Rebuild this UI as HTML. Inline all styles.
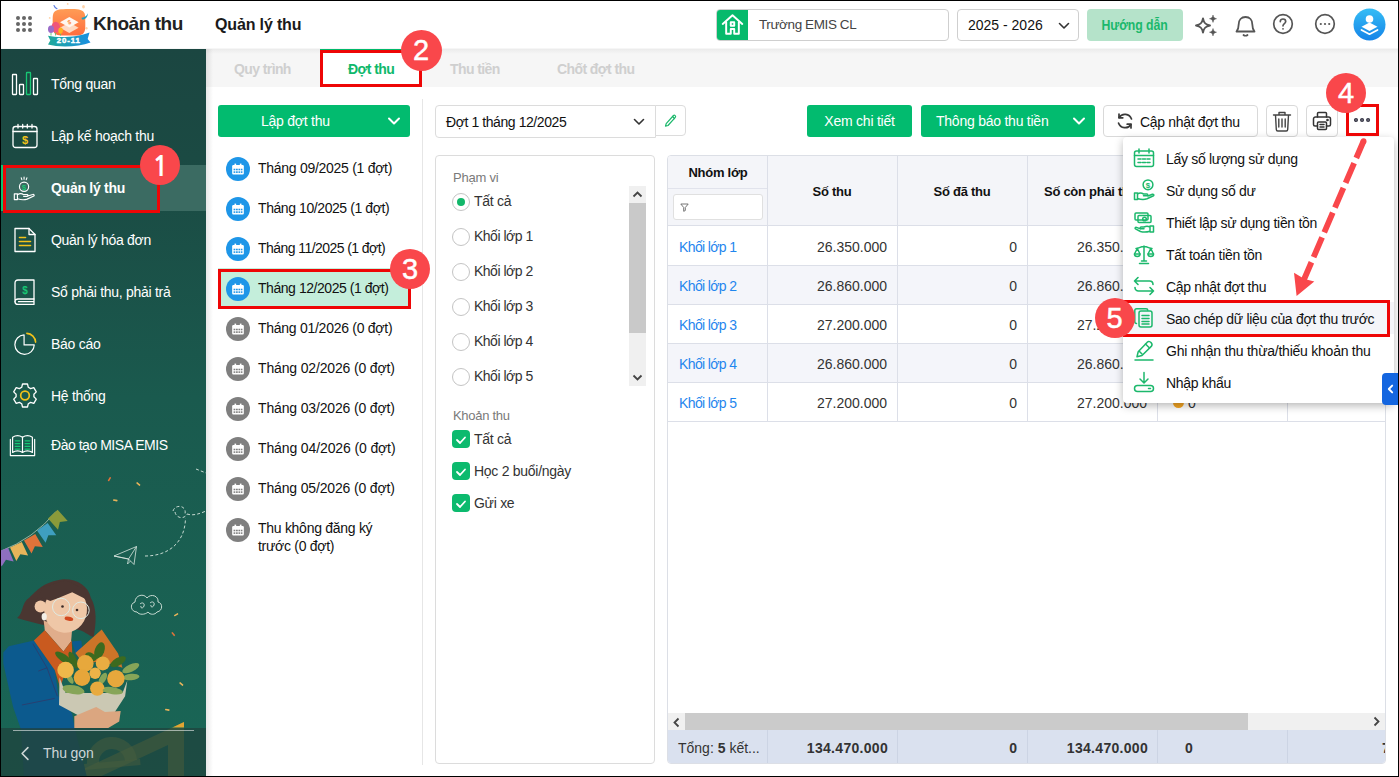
<!DOCTYPE html>
<html lang="vi">
<head>
<meta charset="utf-8">
<title>Quản lý thu - Đợt thu</title>
<style>
*{box-sizing:border-box;margin:0;padding:0}
html,body{width:1399px;height:777px;overflow:hidden;background:#fff}
body{font-family:"Liberation Sans",sans-serif;font-size:14px;color:#111;position:relative}
.abs{position:absolute}
#frame{position:absolute;left:0;top:0;width:1399px;height:777px;border:1px solid #000;border-right-width:1px;border-bottom-width:1px;z-index:100;pointer-events:none}
/* header */
#hdr{position:absolute;left:1px;top:1px;width:1397px;height:48px;background:#fff}
#hdr .t1{position:absolute;left:92px;top:12px;font-size:19px;font-weight:bold;color:#222;letter-spacing:-0.45px;white-space:nowrap}
#hdr .t2{position:absolute;left:214px;top:15px;font-size:16px;font-weight:bold;color:#1a1a1a;letter-spacing:-0.15px;white-space:nowrap}
.box{position:absolute;border:1px solid #cfcfcf;border-radius:4px;background:#fff}
/* sidebar */
#side{position:absolute;left:1px;top:49px;width:205px;height:727px;background:linear-gradient(180deg,#1b4641 0%,#1b4a43 15%,#1a5a4e 48%,#196656 100%);overflow:hidden}
.mi{position:absolute;left:0;width:205px;height:44px;color:#fff;font-size:14px}
.mi span{position:absolute;left:50px;top:14px;white-space:nowrap;letter-spacing:-0.28px}
.mi.act{background:#3b6b62;font-weight:bold}
/* tabs */
#tabs{position:absolute;left:206px;top:49px;width:1192px;height:38px;background:linear-gradient(180deg,#ebebeb 0,#f6f6f6 5px)}
.tab{position:absolute;top:12px;font-size:14px;font-weight:bold;color:#cfcfcf;white-space:nowrap;letter-spacing:-0.6px}
#tabact{position:absolute;left:114px;top:0;width:101px;height:38px;background:#fff;border-top:2px solid #00b96b}
/* list */
.li{position:absolute;left:218px;width:192px;height:40px;font-size:14px;color:#111}
.li .ic{position:absolute;left:8px;top:9px;width:24px;height:24px;border-radius:50%;background:#1e96e8}
.li.g .ic{background:#7f7f7f}
.li span{position:absolute;left:40px;top:12px;white-space:nowrap;letter-spacing:-0.28px}
.btn{position:absolute;height:32px;border-radius:3px;background:#02bb6f;color:#fff;font-size:14px;text-align:center;line-height:33px;white-space:nowrap;letter-spacing:-0.24px}
.wbtn{position:absolute;height:32px;border-radius:4px;background:#fff;border:1px solid #d9d9d9}
/* filter */
.rad{position:absolute;left:16px;width:18px;height:18px;border-radius:50%;border:1px solid #c4c4c4;background:#fff}
.fl{position:absolute;left:38px;font-size:14px;color:#333;white-space:nowrap;letter-spacing:-0.28px}
.chk{position:absolute;left:16px;width:18px;height:18px;border-radius:4px;background:#0cba6e}
/* table */
#tbl{position:absolute;left:667px;top:155px;width:719px;height:609px;border:1px solid #dcdfe6;border-radius:4px;overflow:hidden;background:#fff}
.th{position:absolute;font-weight:bold;font-size:13px;color:#111;white-space:nowrap;letter-spacing:-.27px}
.vl{position:absolute;width:1px;background:#dcdfe8}
.row{position:absolute;left:0;width:717px;height:39px;border-bottom:1px solid #dcdfe8;font-size:14px;color:#333}
.row.alt{background:#f4f5fa}
.row span{position:absolute;top:12px;white-space:nowrap}
/* menu */
#menu{position:absolute;left:1123px;top:137px;width:271px;height:266px;background:#fff;border-radius:4px;box-shadow:0 3px 8px rgba(0,0,0,.28)}
.mn{position:absolute;left:0;width:271px;height:32px;font-size:14px;color:#111}
.mn span{position:absolute;left:43px;top:9px;white-space:nowrap;letter-spacing:-0.3px}
/* annotations */
.rc{position:absolute;border-radius:50%;background:#f9474b;color:#fff;text-align:center;font-size:29px;-webkit-text-stroke:.5px #fff}
.rr{position:absolute;border:3px solid #ee0606}
</style>
</head>
<body>
<div id="hdr">
  <svg class="abs" style="left:14px;top:14px" width="18" height="18" viewBox="0 0 18 18" fill="#666"><circle cx="3" cy="3" r="2"/><circle cx="9" cy="3" r="2"/><circle cx="15" cy="3" r="2"/><circle cx="3" cy="9" r="2"/><circle cx="9" cy="9" r="2"/><circle cx="15" cy="9" r="2"/><circle cx="3" cy="15" r="2"/><circle cx="9" cy="15" r="2"/><circle cx="15" cy="15" r="2"/></svg>
  <svg id="logo" class="abs" style="left:45px;top:1px" width="46" height="46" viewBox="46 2 46 46">
    <defs><linearGradient id="lg1" x1="0" y1="0" x2="0" y2="1"><stop offset="0" stop-color="#ff9c55"/><stop offset="1" stop-color="#ff6d3f"/></linearGradient><linearGradient id="lg2" x1="0" y1="0" x2="1" y2="0"><stop offset="0" stop-color="#20a99a"/><stop offset="1" stop-color="#1a8fe2"/></linearGradient></defs>
    <path d="M69 9c9 0 12.500.5 14.500 2.800S85.300 17 85.300 22.500 85.500 31 83.500 33.200 78 35.600 69 35.600 56.500 35.500 54.500 33.200 52.700 28 52.700 22.500 52.500 14 54.500 11.800 60 9 69 9z" fill="url(#lg1)"/>
    <path d="M69.300 22.500l9.300 5.200-9.300 5.200-9.300-5.200z" fill="#ffd9c2"/>
    <path d="M69.300 17l9.300 5.200-9.300 5.200-9.300-5.200z" fill="#fff7f0"/>
    <text x="69.300" y="24.300" font-size="6" font-weight="bold" fill="#ff8a3c" text-anchor="middle" font-family="Liberation Sans, sans-serif" transform="rotate(-20 69.300 22.200)">$</text>
    <path d="M51 33v2.500M55.500 32.500v3M60.500 33.500v2" stroke="#5fc070" stroke-width=".9"/>
    <ellipse cx="55.700" cy="27.200" rx="4.300" ry="5.400" fill="#f0557a"/><ellipse cx="51" cy="29.300" rx="3" ry="3.700" fill="#9a6cc9"/><ellipse cx="60.600" cy="30.600" rx="2.300" ry="3.100" fill="#ffb320"/>
    <path d="M48 35.800c12 2.600 30 1.200 41.500-3.300l-1.800 6.500 2.800 3.400c-12 4.500-31 5.200-42.500 2l2.300-4z" fill="url(#lg2)"/>
    <text x="68.800" y="43" font-size="7.800" font-weight="bold" fill="#fff" stroke="#fff" stroke-width=".45" text-anchor="middle" letter-spacing=".9" font-family="Liberation Sans, sans-serif">20-11</text>
    <path d="M81.500 17.800c3.500-.3 5.500-2 6.300-4.500.2 3.500-2.500 6.500-5.800 6.300z" fill="#1f9fc0"/><path d="M54 5.500c.5 1.500 1.500 2.600 3 3.300" stroke="#5a7ae0" stroke-width="1.100" fill="none" stroke-linecap="round"/>
    <circle cx="67.700" cy="3.900" r=".9" fill="#ffd3a8"/><ellipse cx="83.500" cy="6.800" rx="1.400" ry="1.800" fill="#ffd3a8"/><circle cx="49.700" cy="17.900" r=".9" fill="#ffd3a8"/><circle cx="86.400" cy="28.300" r="1.200" fill="#ffd3a8"/>
  </svg>
  <div class="t1">Khoản thu</div>
  <div class="t2">Quản lý thu</div>
  <div class="box" style="left:715px;top:8px;width:233px;height:32px;overflow:hidden"><div class="abs" style="left:-1px;top:-1px;width:32px;height:32px;background:#06ba6c"></div>
    <svg class="abs" style="left:4px;top:3px" width="23" height="23" viewBox="0 0 20 20" fill="none" stroke="#fff" stroke-width="1.700" stroke-linejoin="round" stroke-linecap="round"><path d="M1.500 9.500L10 2l8.500 7.500"/><path d="M4.500 8v10h4v-4h3v4h4V8"/><rect x="8.500" y="8" width="3" height="3"/></svg>
    <span class="abs" style="left:42px;top:7px;font-size:13.500px;color:#444;white-space:nowrap;letter-spacing:-.4px">Trường EMIS CL</span></div>
  <div class="box" style="left:956px;top:8px;width:122px;height:32px"><span class="abs" style="left:10px;top:7px;font-size:14px;color:#111;white-space:nowrap">2025 - 2026</span>
    <svg class="abs" style="left:100px;top:11px" width="12" height="10" viewBox="0 0 12 10" fill="none" stroke="#333" stroke-width="1.600" stroke-linecap="round" stroke-linejoin="round"><path d="M1.500 2.500L6 7l4.500-4.500"/></svg></div>
  <div class="abs" style="left:1086px;top:8px;width:96px;height:32px;border-radius:4px;background:#b5e3ca;color:#1cb86c;font-weight:bold;font-size:14px;text-align:center;line-height:33px"><span style="display:inline-block;transform:scaleX(.88);letter-spacing:-.1px">Hướng dẫn</span></div>
  <svg class="abs" style="left:1192px;top:12px" width="26" height="26" viewBox="0 0 26 26" fill="none" stroke="#555" stroke-width="1.900" stroke-linejoin="round"><path d="M10 5.500c.8 4.500 2.500 6.200 7 7-4.500.8-6.200 2.500-7 7-.8-4.500-2.500-6.200-7-7 4.500-.8 6.200-2.500 7-7z"/><path d="M20 2c.5 2.500 1.200 3.200 3.500 3.700-2.300.5-3 1.200-3.500 3.700-.5-2.500-1.200-3.200-3.500-3.700 2.300-.5 3-1.200 3.500-3.700z" fill="#555" stroke-width=".5"/><path d="M20 15.500c.5 2.500 1.200 3.200 3.500 3.700-2.300.5-3 1.200-3.500 3.700-.5-2.500-1.200-3.200-3.500-3.700 2.300-.5 3-1.200 3.500-3.700z" fill="#555" stroke-width=".5"/></svg>
  <svg class="abs" style="left:1232px;top:12px" width="24" height="26" viewBox="0 0 24 26" fill="none" stroke="#555" stroke-width="1.800" stroke-linecap="round" stroke-linejoin="round"><path d="M12.500 4c-4.200 0-6.800 3.200-6.800 7.200 0 3.500-.8 5.500-2.200 7.300h18c-1.400-1.800-2.200-3.800-2.200-7.300 0-4-2.600-7.200-6.800-7.200z"/><path d="M10.500 22c1 .9 3 .9 4 0"/></svg>
  <svg class="abs" style="left:1271px;top:12px" width="22" height="22" viewBox="0 0 22 22" fill="none" stroke="#555" stroke-width="1.700"><circle cx="11" cy="11" r="9.300"/><path d="M8.300 8.600c0-1.600 1.200-2.600 2.700-2.600s2.700 1 2.700 2.500c0 2-2.700 2.100-2.700 4.300" stroke-linecap="round"/><circle cx="11" cy="15.800" r=".9" fill="#555" stroke="none"/></svg>
  <svg class="abs" style="left:1313px;top:12px" width="22" height="22" viewBox="0 0 22 22" fill="none" stroke="#555" stroke-width="1.700"><circle cx="11" cy="11" r="9.300"/><g fill="#555" stroke="none"><circle cx="6.800" cy="11" r="1.100"/><circle cx="11" cy="11" r="1.100"/><circle cx="15.200" cy="11" r="1.100"/></g></svg>
  <svg class="abs" style="left:1352px;top:7px" width="33" height="33" viewBox="0 0 33 33"><defs><linearGradient id="av" x1="0" y1="0" x2="0" y2="1"><stop offset="0" stop-color="#35bdf5"/><stop offset="1" stop-color="#1584e8"/></linearGradient></defs><circle cx="16.500" cy="16.500" r="16" fill="url(#av)"/><circle cx="16.500" cy="11" r="3.800" fill="#fff"/><path d="M16.500 14.500l8 4.200-8 4.200-8-4.200z" fill="#fff"/><path d="M8.500 22l8 4.200 8-4.200" stroke="#fff" stroke-width="1.800" fill="none" stroke-linecap="round" stroke-linejoin="round"/></svg>
  <div class="abs" style="left:0;top:47px;width:1397px;height:1px;background:#f6f6f6"></div>
</div>
<div id="side">
  <div class="mi" style="top:13px"><svg class="abs" style="left:10px;top:9px" width="28" height="26" viewBox="0 0 28 26" stroke="#fff" stroke-width="1.300" fill="none" stroke-linecap="round" stroke-linejoin="round"><rect x="1.500" y="3.500" width="4" height="20" rx=".5"/><rect x="8.500" y="13.500" width="4" height="10" rx=".5"/><rect x="15.500" y="1.500" width="4" height="22" rx=".5" stroke="#17c774"/><rect x="22.500" y="7.500" width="4" height="16" rx=".5"/></svg><span>Tổng quan</span></div>
  <div class="mi" style="top:65px"><svg class="abs" style="left:10px;top:8px" width="28" height="28" viewBox="0 0 28 28" stroke="#fff" stroke-width="1.300" fill="none" stroke-linecap="round" stroke-linejoin="round"><rect x="2" y="4.500" width="24" height="21" rx="2.500"/><path d="M2 9.500h24M7 2.500v3.500M11.700 2.500v3.500M16.300 2.500v3.500M21 2.500v3.500"/><text x="14" y="22" font-size="11" font-weight="bold" fill="#f2c21a" stroke="none" text-anchor="middle" font-family="Liberation Sans, sans-serif">$</text></svg><span>Lập kế hoạch thu</span></div>
  <div class="mi act" style="top:116px;height:46px"><div class="abs" style="left:0;top:0;width:2px;height:46px;background:#10c070"></div><svg class="abs" style="left:12px;top:11px" width="23" height="25" viewBox="0 0 26 28" stroke="#fff" stroke-width="1.300" fill="none" stroke-linecap="round" stroke-linejoin="round"><circle cx="12.500" cy="12" r="5.200"/><path d="M12.500 1v2.500M9.300 2l.7 2M15.700 2l-.7 2"/><text x="12.500" y="15.300" font-size="8.500" font-weight="bold" fill="#17c774" stroke="none" text-anchor="middle" font-family="Liberation Sans, sans-serif">$</text><path d="M1.500 20h3.500v6.500H1.500zM5 21c2.500-1.500 5-1.500 7 0h4c1.200 0 1.200 2 0 2h-4M5 25.500c4 1.500 8 1.500 11 .5l7.500-3.500c1-.8 0-2.200-1.300-1.700L16.800 22.500"/></svg><span style="top:15px">Quản lý thu</span></div>
  <div class="mi" style="top:169px"><svg class="abs" style="left:12px;top:8px" width="24" height="28" viewBox="0 0 24 28" stroke="#fff" stroke-width="1.300" fill="none" stroke-linecap="round" stroke-linejoin="round"><path d="M2 2.500h14l6 6v17H2z"/><path d="M16 2.500v6h6"/><path d="M6.500 11.500h6M6.500 15.500h11M6.500 19.500h11" stroke="#f2c21a" stroke-width="1.600"/></svg><span>Quản lý hóa đơn</span></div>
  <div class="mi" style="top:221px"><svg class="abs" style="left:12px;top:8px" width="24" height="28" viewBox="0 0 24 28" stroke="#fff" stroke-width="1.300" fill="none" stroke-linecap="round" stroke-linejoin="round"><path d="M5 2h16v19H5c-1.800 0-3 1.200-3 2.700V5c0-1.800 1.200-3 3-3z"/><path d="M2 23.700C2 25.200 3.200 26.400 5 26.400h16M21 21v5.400M5.500 23.700H21"/><text x="12" y="15.500" font-size="10" font-weight="bold" fill="#17c774" stroke="none" text-anchor="middle" font-family="Liberation Sans, sans-serif">$</text></svg><span>Sổ phải thu, phải trả</span></div>
  <div class="mi" style="top:273px"><svg class="abs" style="left:12px;top:10px" width="24" height="24" viewBox="0 0 26 26" stroke="#fff" stroke-width="1.300" fill="none" stroke-linecap="round" stroke-linejoin="round"><path d="M12 3.200A10.500 10.500 0 1 0 23 14H12z"/><path d="M15 1.500A10 10 0 0 1 24.500 11" stroke="#f2c21a" stroke-width="1.700"/></svg><span>Báo cáo</span></div>
  <div class="mi" style="top:325px"><svg class="abs" style="left:10px;top:8px" width="28" height="28" viewBox="0 0 28 28" stroke="#fff" stroke-width="1.300" fill="none" stroke-linecap="round" stroke-linejoin="round"><path d="M11.500 2h5l.8 3.300 2.300 1.300 3.200-1 2.500 4.300-2.400 2.300v2.600l2.400 2.300-2.500 4.300-3.200-1-2.300 1.300-.8 3.300h-5l-.8-3.300-2.300-1.300-3.200 1-2.500-4.300 2.400-2.300v-2.600L2.700 9.900l2.500-4.300 3.200 1 2.300-1.300z"/><circle cx="14" cy="13.500" r="4.300" stroke="#f2c21a" stroke-width="1.700"/></svg><span>Hệ thống</span></div>
  <div class="mi" style="top:374px"><svg class="abs" style="left:8px;top:10px" width="27" height="24" viewBox="0 0 30 26" preserveAspectRatio="none" stroke="#fff" stroke-width="1.300" fill="none" stroke-linecap="round" stroke-linejoin="round"><path d="M4 4.500c3.500-2 7.500-2 11 0 3.500-2 7.500-2 11 0v16.500c-3.500-2-7.500-2-11 0-3.500-2-7.500-2-11 0z"/><path d="M15 4.500v16.500M1.500 7v17.500h27V7"/><path d="M7 8.500h5M7 11.500h5M7 14.500h5M7 17.500h5M18 8.500h5M18 11.500h5M18 14.500h5M18 17.500h5" stroke="#17c774" stroke-width="1.500"/></svg><span style="letter-spacing:-.47px">Đào tạo MISA EMIS</span></div>
  <svg class="abs" style="left:0;top:0" width="205" height="727" viewBox="1 49 205 727">
<g><path d="M184 722V800H17zM168 745V800H50z" fill="#8a8f3e" fill-rule="evenodd" opacity=".55"/><path d="M87 764a25 25 0 0 1 50-4l-12 1a13 13 0 0 0-26 2z" fill="#8a9446" opacity=".5"/><path d="M84 764l56-5 .600 6-56 5z" fill="#8a9446" opacity=".5"/><path d="M173 727.200l11-5.200v5.200z" fill="#e2a533"/></g>
<path d="M0 551.500Q34 538.500 56 511.500" stroke="#c9d6c0" stroke-width=".7" fill="none"/>
<path d="M0 0h13v15l-6.500-4.500L0 15z" fill="#8f6fc0" transform="translate(-4 552.5) rotate(-22)"/><path d="M0 0h13v15l-6.500-4.500L0 15z" fill="#e8b45a" transform="translate(10 547.5) rotate(-25)"/><path d="M0 0h13v15l-6.500-4.500L0 15z" fill="#e0733a" transform="translate(24 540.5) rotate(-30)"/><path d="M0 0h13v15l-6.500-4.500L0 15z" fill="#3f9fc0" transform="translate(37 530.5) rotate(-35)"/><path d="M0 0h13v15l-6.500-4.500L0 15z" fill="#8a9a3a" transform="translate(48 518.5) rotate(-42)"/>
<g stroke="#d9e6df" stroke-width=".8" fill="none" stroke-linejoin="round"><path d="M114 556l22.500-9.500-2.500 18-5.500-5.500zM136.500 546.500l-8 12.500M128.500 559l-1 5 3-3M114 556l14.500 3"/></g>
<path d="M145 556c22 0 40-12 40.500-38M173 511c2-7 14-6 12 3M187 514c6 2 12 0 19-3M196 469l10 4M175 512c1 6 9 8 12 2" stroke="#d9e6df" stroke-width=".9" stroke-dasharray="3 2.200" fill="none"/>
<g stroke="#d9e6df" stroke-width=".9" fill="none"><path d="M137 612c-6 0-8-8-2-10 0-7 9-9 12-4 4-5 12-2 11 4 5 1 5 9-1 10-2 3-7 3-9 0-3 3-9 3-11 0z"/><path d="M140 604c2-2 5-1 4 2s-4 2-3 0M150 603c2-2 5-1 4 2s-4 2-3 0"/></g>
<rect x="107.5" y="478.5" width="4.500" height="1.600" rx=".5" fill="#e0733a" transform="rotate(-60 109.5 479.5)"/>
<rect x="136" y="483" width="4.500" height="1.600" rx=".5" fill="#e8b45a" transform="rotate(40 138 484)"/>
<rect x="113" y="499.5" width="4.500" height="1.600" rx=".5" fill="#e8b45a" transform="rotate(10 115 500.5)"/>
<rect x="174" y="614" width="4.500" height="1.600" rx=".5" fill="#e8b45a" transform="rotate(-30 176 615)"/>
<rect x="171" y="633" width="4.500" height="1.600" rx=".5" fill="#e0733a" transform="rotate(50 173 634)"/>
<rect x="179" y="683" width="4.500" height="1.600" rx=".5" fill="#e8b45a" transform="rotate(40 181 684)"/>
<rect x="165" y="709" width="4.500" height="1.600" rx=".5" fill="#e8b45a" transform="rotate(10 167 710)"/>
<path d="M17.1 617.9 C24.1 612.0 20.8 603.3 29.5 597.4 C36.1 591.2 43.7 581.4 63.4 579.2 C76.5 578.6 88.6 585.8 90.8 597.8 C97.3 608.7 96.2 624.0 93.6 637.2 C87.5 635.0 84.2 630.6 76.5 629.5 C65.6 632.8 52.5 630.6 43.7 625.1 C35.0 622.9 26.2 620.8 17.1 617.9 C17.1 617.9 17.1 617.9 17.1 617.9 Z" fill="#4a3631"/>
<polygon points="20.8,727.9 74.8,727.9 87.5,779.3 24.1,779.3" fill="#1b5d66"/><polygon points="3.3,652.5 8.7,646.3 33.9,640.4 54.7,670.0 58.6,696.2 72.2,713.7 74.8,729.0 20.8,729.0 13.1,707.1 3.3,663.4" fill="#0c5a8e"/>
<polygon points="71.7,641.5 81.3,640.4 82.7,651.4 75.4,652.9" fill="#0c5a8e"/><path d="M32.8 643.7 L47.0 667.8 L38.3 671.1 M47.0 667.8 L57.3 696.2 M21.9 705.0 L54.7 698.4" stroke="#3a2f5e" stroke-width=".6" fill="none"/>
<polygon points="43.7,620.8 72.2,628.4 71.1,641.5 63.4,651.4 44.8,630.2" fill="#e0ad8b"/>
<polygon points="33.9,640.4 44.8,630.2 63.4,651.4 71.7,640.4 72.2,652.5 60.1,687.5 54.7,670.0" fill="#c95a1f"/>
<ellipse cx="65.6" cy="609.8" rx="21.4" ry="23.0" transform="rotate(8 65.6 609.8)" fill="#efc7a7"/>
<circle cx="40.5" cy="606.5" r="5.9" fill="#efc7a7"/>
<polygon points="35.0,602.2 43.7,586.9 65.6,580.3 84.2,589.1 87.5,600.0 72.2,592.3 59.0,597.8 50.3,601.1 42.6,597.8" fill="#4a3631"/>
<ellipse cx="44.2" cy="616.8" rx="2.6" ry="3.7" transform="rotate(0 44.2 616.8)" fill="#f4efe6"/>
<circle cx="61.2" cy="607.0" r="8.7" fill="none" stroke="#dfeae3" stroke-width="1"/>
<circle cx="80.9" cy="610.3" r="8.3" fill="none" stroke="#dfeae3" stroke-width="1"/>
<circle cx="62.5" cy="606.5" r="1.3" fill="#3a2a26"/><circle cx="77.0" cy="610.0" r="1.3" fill="#3a2a26"/>
<ellipse cx="68.9" cy="618.8" rx="4.4" ry="2.0" transform="rotate(12 68.9 618.8)" fill="#d2481f"/>
<polygon points="75.4,652.9 101.7,629.5 118.1,653.6 122.5,667.8 102.8,661.2 83.1,663.4" fill="#cc7428"/>
<ellipse cx="63.4" cy="657.9" rx="9.8" ry="3.7" transform="rotate(35 63.4 657.9)" fill="#3c6a1f"/>
<ellipse cx="73.3" cy="660.1" rx="9.2" ry="3.3" transform="rotate(65 73.3 660.1)" fill="#3c6a1f"/>
<ellipse cx="99.5" cy="650.7" rx="8.7" ry="4.8" transform="rotate(-70 99.5 650.7)" fill="#3c6a1f"/>
<ellipse cx="90.8" cy="656.8" rx="6.1" ry="3.9" transform="rotate(30 90.8 656.8)" fill="#3c6a1f"/>
<ellipse cx="118.1" cy="661.7" rx="8.7" ry="3.9" transform="rotate(-30 118.1 661.7)" fill="#3c6a1f"/>
<ellipse cx="130.8" cy="668.2" rx="9.2" ry="3.7" transform="rotate(-25 130.8 668.2)" fill="#86a558"/>
<ellipse cx="131.2" cy="677.0" rx="8.3" ry="3.3" transform="rotate(-5 131.2 677.0)" fill="#86a558"/>
<ellipse cx="73.3" cy="690.1" rx="11.4" ry="4.8" transform="rotate(10 73.3 690.1)" fill="#86a558"/>
<ellipse cx="112.6" cy="690.7" rx="10.5" ry="3.5" transform="rotate(10 112.6 690.7)" fill="#86a558"/>
<ellipse cx="102.8" cy="678.7" rx="6.6" ry="3.1" transform="rotate(-60 102.8 678.7)" fill="#86a558"/>
<ellipse cx="70.0" cy="678.7" rx="5.7" ry="2.6" transform="rotate(60 70.0 678.7)" fill="#86a558"/>
<polygon points="59.5,677.6 65.6,692.9 122.5,692.9 127.3,680.5 125.1,696.2 113.7,713.7 83.1,718.1 59.0,705.0" fill="#cbc8b3"/>
<circle cx="65.6" cy="670.0" r="8.3" fill="#f0b84a"/>
<circle cx="85.3" cy="663.4" r="8.3" fill="#e7a83c"/>
<circle cx="102.8" cy="663.4" r="7.0" fill="#e9ad42"/>
<circle cx="82.0" cy="677.6" r="8.3" fill="#e6a63a"/>
<circle cx="95.1" cy="673.2" r="5.7" fill="#edb348"/>
<circle cx="115.9" cy="678.7" r="8.7" fill="#e7a83c"/>
<circle cx="97.3" cy="688.6" r="7.2" fill="#e8aa3e"/>
<ellipse cx="73.3" cy="690.1" rx="10.9" ry="3.9" transform="rotate(10 73.3 690.1)" fill="#86a558"/><ellipse cx="112.6" cy="691.4" rx="10.1" ry="2.8" transform="rotate(8 112.6 691.4)" fill="#86a558"/>
<polygon points="74.3,716.3 96.2,707.1 105.0,711.9 120.7,711.1 119.2,721.4 108.2,727.9 74.3,727.9" fill="#dba680"/>
</svg>
  <div class="abs" style="left:0;top:679px;width:205px;height:48px;background:rgba(32,60,56,.62)"></div>
  <div class="abs" style="left:12px;top:681px;width:181px;height:1px;background:rgba(255,255,255,.55)"></div>
  <svg class="abs" style="left:18.500px;top:697px" width="10" height="15" viewBox="0 0 12 18" fill="none" stroke="#cfd8d6" stroke-width="1.900" stroke-linecap="round" stroke-linejoin="round"><path d="M9.500 2L2.500 9l7 7"/></svg>
  <div class="abs" style="left:42px;top:696px;font-size:14px;color:#cdd6d8;white-space:nowrap;letter-spacing:-.1px">Thu gọn</div>
</div>
<div id="tabs">
  <div id="tabact"></div>
  <div class="tab" style="left:28px">Quy trình</div>
  <div class="tab" style="left:142px;color:#0fb86b">Đợt thu</div>
  <div class="tab" style="left:244px">Thu tiền</div>
  <div class="tab" style="left:351px">Chốt đợt thu</div>
</div>
<div class="abs" style="left:422px;top:99px;width:1px;height:666px;background:#e6e6e6"></div>
<div class="btn" style="left:218px;top:105px;width:192px"><span class="abs" style="left:43px;top:0">Lập đợt thu</span><svg class="abs" style="left:169px;top:11px" width="14" height="10" viewBox="0 0 14 10" fill="none" stroke="#fff" stroke-width="2" stroke-linecap="round" stroke-linejoin="round"><path d="M2 2.500l5 5 5-5"/></svg></div>
<div class="li" style="top:148px"><div class="ic"><svg class="abs" style="left:5px;top:6px" width="14" height="12.500" viewBox="0 0 12 12" preserveAspectRatio="none"><rect x="1" y="2" width="10" height="9" rx="1" fill="#fff"/><rect x="3" y=".6" width="1.400" height="2.600" fill="#fff"/><rect x="7.600" y=".6" width="1.400" height="2.600" fill="#fff"/><g fill="#1e96e8"><rect x="2.200" y="5.500" width="1.500" height="1.500"/><rect x="4.300" y="5.500" width="1.500" height="1.500"/><rect x="6.400" y="5.500" width="1.500" height="1.500"/><rect x="8.500" y="5.500" width="1.300" height="1.500"/><rect x="2.200" y="8" width="1.500" height="1.500"/><rect x="4.300" y="8" width="1.500" height="1.500"/><rect x="6.400" y="8" width="1.500" height="1.500"/><rect x="8.500" y="8" width="1.300" height="1.500"/></g></svg></div><span style="letter-spacing:-0.28px">Tháng 09/2025 (1 đợt)</span></div>
<div class="li" style="top:188px"><div class="ic"><svg class="abs" style="left:5px;top:6px" width="14" height="12.500" viewBox="0 0 12 12" preserveAspectRatio="none"><rect x="1" y="2" width="10" height="9" rx="1" fill="#fff"/><rect x="3" y=".6" width="1.400" height="2.600" fill="#fff"/><rect x="7.600" y=".6" width="1.400" height="2.600" fill="#fff"/><g fill="#1e96e8"><rect x="2.200" y="5.500" width="1.500" height="1.500"/><rect x="4.300" y="5.500" width="1.500" height="1.500"/><rect x="6.400" y="5.500" width="1.500" height="1.500"/><rect x="8.500" y="5.500" width="1.300" height="1.500"/><rect x="2.200" y="8" width="1.500" height="1.500"/><rect x="4.300" y="8" width="1.500" height="1.500"/><rect x="6.400" y="8" width="1.500" height="1.500"/><rect x="8.500" y="8" width="1.300" height="1.500"/></g></svg></div><span style="letter-spacing:-0.42px">Tháng 10/2025 (1 đợt)</span></div>
<div class="li" style="top:228px"><div class="ic"><svg class="abs" style="left:5px;top:6px" width="14" height="12.500" viewBox="0 0 12 12" preserveAspectRatio="none"><rect x="1" y="2" width="10" height="9" rx="1" fill="#fff"/><rect x="3" y=".6" width="1.400" height="2.600" fill="#fff"/><rect x="7.600" y=".6" width="1.400" height="2.600" fill="#fff"/><g fill="#1e96e8"><rect x="2.200" y="5.500" width="1.500" height="1.500"/><rect x="4.300" y="5.500" width="1.500" height="1.500"/><rect x="6.400" y="5.500" width="1.500" height="1.500"/><rect x="8.500" y="5.500" width="1.300" height="1.500"/><rect x="2.200" y="8" width="1.500" height="1.500"/><rect x="4.300" y="8" width="1.500" height="1.500"/><rect x="6.400" y="8" width="1.500" height="1.500"/><rect x="8.500" y="8" width="1.300" height="1.500"/></g></svg></div><span style="letter-spacing:-0.56px">Tháng 11/2025 (1 đợt)</span></div>
<div class="li" style="top:268px;background:#c4eedb"><div class="ic"><svg class="abs" style="left:5px;top:6px" width="14" height="12.500" viewBox="0 0 12 12" preserveAspectRatio="none"><rect x="1" y="2" width="10" height="9" rx="1" fill="#fff"/><rect x="3" y=".6" width="1.400" height="2.600" fill="#fff"/><rect x="7.600" y=".6" width="1.400" height="2.600" fill="#fff"/><g fill="#1e96e8"><rect x="2.200" y="5.500" width="1.500" height="1.500"/><rect x="4.300" y="5.500" width="1.500" height="1.500"/><rect x="6.400" y="5.500" width="1.500" height="1.500"/><rect x="8.500" y="5.500" width="1.300" height="1.500"/><rect x="2.200" y="8" width="1.500" height="1.500"/><rect x="4.300" y="8" width="1.500" height="1.500"/><rect x="6.400" y="8" width="1.500" height="1.500"/><rect x="8.500" y="8" width="1.300" height="1.500"/></g></svg></div><span style="letter-spacing:-0.45px">Tháng 12/2025 (1 đợt)</span></div>
<div class="li g" style="top:308px"><div class="ic"><svg class="abs" style="left:5px;top:6px" width="14" height="12.500" viewBox="0 0 12 12" preserveAspectRatio="none"><rect x="1" y="2" width="10" height="9" rx="1" fill="#fff"/><rect x="3" y=".6" width="1.400" height="2.600" fill="#fff"/><rect x="7.600" y=".6" width="1.400" height="2.600" fill="#fff"/><g fill="#7f7f7f"><rect x="2.200" y="5.500" width="1.500" height="1.500"/><rect x="4.300" y="5.500" width="1.500" height="1.500"/><rect x="6.400" y="5.500" width="1.500" height="1.500"/><rect x="8.500" y="5.500" width="1.300" height="1.500"/><rect x="2.200" y="8" width="1.500" height="1.500"/><rect x="4.300" y="8" width="1.500" height="1.500"/><rect x="6.400" y="8" width="1.500" height="1.500"/><rect x="8.500" y="8" width="1.300" height="1.500"/></g></svg></div><span style="letter-spacing:-0.27px">Tháng 01/2026 (0 đợt)</span></div>
<div class="li g" style="top:348px"><div class="ic"><svg class="abs" style="left:5px;top:6px" width="14" height="12.500" viewBox="0 0 12 12" preserveAspectRatio="none"><rect x="1" y="2" width="10" height="9" rx="1" fill="#fff"/><rect x="3" y=".6" width="1.400" height="2.600" fill="#fff"/><rect x="7.600" y=".6" width="1.400" height="2.600" fill="#fff"/><g fill="#7f7f7f"><rect x="2.200" y="5.500" width="1.500" height="1.500"/><rect x="4.300" y="5.500" width="1.500" height="1.500"/><rect x="6.400" y="5.500" width="1.500" height="1.500"/><rect x="8.500" y="5.500" width="1.300" height="1.500"/><rect x="2.200" y="8" width="1.500" height="1.500"/><rect x="4.300" y="8" width="1.500" height="1.500"/><rect x="6.400" y="8" width="1.500" height="1.500"/><rect x="8.500" y="8" width="1.300" height="1.500"/></g></svg></div><span style="letter-spacing:-0.15px">Tháng 02/2026 (0 đợt)</span></div>
<div class="li g" style="top:388px"><div class="ic"><svg class="abs" style="left:5px;top:6px" width="14" height="12.500" viewBox="0 0 12 12" preserveAspectRatio="none"><rect x="1" y="2" width="10" height="9" rx="1" fill="#fff"/><rect x="3" y=".6" width="1.400" height="2.600" fill="#fff"/><rect x="7.600" y=".6" width="1.400" height="2.600" fill="#fff"/><g fill="#7f7f7f"><rect x="2.200" y="5.500" width="1.500" height="1.500"/><rect x="4.300" y="5.500" width="1.500" height="1.500"/><rect x="6.400" y="5.500" width="1.500" height="1.500"/><rect x="8.500" y="5.500" width="1.300" height="1.500"/><rect x="2.200" y="8" width="1.500" height="1.500"/><rect x="4.300" y="8" width="1.500" height="1.500"/><rect x="6.400" y="8" width="1.500" height="1.500"/><rect x="8.500" y="8" width="1.300" height="1.500"/></g></svg></div><span style="letter-spacing:-0.15px">Tháng 03/2026 (0 đợt)</span></div>
<div class="li g" style="top:428px"><div class="ic"><svg class="abs" style="left:5px;top:6px" width="14" height="12.500" viewBox="0 0 12 12" preserveAspectRatio="none"><rect x="1" y="2" width="10" height="9" rx="1" fill="#fff"/><rect x="3" y=".6" width="1.400" height="2.600" fill="#fff"/><rect x="7.600" y=".6" width="1.400" height="2.600" fill="#fff"/><g fill="#7f7f7f"><rect x="2.200" y="5.500" width="1.500" height="1.500"/><rect x="4.300" y="5.500" width="1.500" height="1.500"/><rect x="6.400" y="5.500" width="1.500" height="1.500"/><rect x="8.500" y="5.500" width="1.300" height="1.500"/><rect x="2.200" y="8" width="1.500" height="1.500"/><rect x="4.300" y="8" width="1.500" height="1.500"/><rect x="6.400" y="8" width="1.500" height="1.500"/><rect x="8.500" y="8" width="1.300" height="1.500"/></g></svg></div><span style="letter-spacing:-0.12px">Tháng 04/2026 (0 đợt)</span></div>
<div class="li g" style="top:468px"><div class="ic"><svg class="abs" style="left:5px;top:6px" width="14" height="12.500" viewBox="0 0 12 12" preserveAspectRatio="none"><rect x="1" y="2" width="10" height="9" rx="1" fill="#fff"/><rect x="3" y=".6" width="1.400" height="2.600" fill="#fff"/><rect x="7.600" y=".6" width="1.400" height="2.600" fill="#fff"/><g fill="#7f7f7f"><rect x="2.200" y="5.500" width="1.500" height="1.500"/><rect x="4.300" y="5.500" width="1.500" height="1.500"/><rect x="6.400" y="5.500" width="1.500" height="1.500"/><rect x="8.500" y="5.500" width="1.300" height="1.500"/><rect x="2.200" y="8" width="1.500" height="1.500"/><rect x="4.300" y="8" width="1.500" height="1.500"/><rect x="6.400" y="8" width="1.500" height="1.500"/><rect x="8.500" y="8" width="1.300" height="1.500"/></g></svg></div><span style="letter-spacing:-0.15px">Tháng 05/2026 (0 đợt)</span></div>
<div class="li g" style="top:509px;height:56px"><div class="ic"><svg class="abs" style="left:5px;top:6px" width="14" height="12.500" viewBox="0 0 12 12" preserveAspectRatio="none"><rect x="1" y="2" width="10" height="9" rx="1" fill="#fff"/><rect x="3" y=".6" width="1.400" height="2.600" fill="#fff"/><rect x="7.600" y=".6" width="1.400" height="2.600" fill="#fff"/><g fill="#7f7f7f"><rect x="2.200" y="5.500" width="1.500" height="1.500"/><rect x="4.300" y="5.500" width="1.500" height="1.500"/><rect x="6.400" y="5.500" width="1.500" height="1.500"/><rect x="8.500" y="5.500" width="1.300" height="1.500"/><rect x="2.200" y="8" width="1.500" height="1.500"/><rect x="4.300" y="8" width="1.500" height="1.500"/><rect x="6.400" y="8" width="1.500" height="1.500"/><rect x="8.500" y="8" width="1.300" height="1.500"/></g></svg></div><span style="white-space:normal;width:150px;line-height:18px;top:10px">Thu không đăng ký trước (0 đợt)</span></div>
<div class="box" style="left:435px;top:105px;width:221px;height:33px;border-color:#dcdcdc;border-radius:4px 0 0 4px"><span class="abs" style="left:10px;top:8px;font-size:14px;color:#111;white-space:nowrap;letter-spacing:-.42px">Đợt 1 tháng 12/2025</span><svg class="abs" style="left:197px;top:11px" width="12" height="10" viewBox="0 0 12 10" fill="none" stroke="#333" stroke-width="1.600" stroke-linecap="round" stroke-linejoin="round"><path d="M1.500 2.500L6 7l4.500-4.500"/></svg></div>
<div class="box" style="left:655px;top:105px;width:31px;height:31px;border-color:#dcdcdc;border-radius:0 4px 4px 0"><svg class="abs" style="left:7px;top:7px" width="16" height="16" viewBox="0 0 16 16" fill="none" stroke="#1cb86c" stroke-width="1.200" stroke-linejoin="round" stroke-linecap="round"><path d="M10.500 2.500c1-1 2.800.8 1.800 1.800L5 12.500 2.500 13.200 3.200 10.700z"/><path d="M9.500 3.500l2 2"/></svg></div>
<div class="box" style="left:435px;top:155px;width:220px;height:609px;border-color:#dcdcdc">
<div class="abs" style="left:17px;top:14px;font-size:13px;color:#7a7a7a;letter-spacing:-.2px">Phạm vi</div>
<div class="rad" style="top:37px"><div class="abs" style="left:4px;top:4px;width:8px;height:8px;border-radius:50%;background:#12b76a"></div></div><div class="fl" style="top:37px">Tất cả</div>
<div class="rad" style="top:72px"></div><div class="fl" style="top:72px;letter-spacing:-.5px">Khối lớp 1</div>
<div class="rad" style="top:107px"></div><div class="fl" style="top:107px;letter-spacing:-.5px">Khối lớp 2</div>
<div class="rad" style="top:142px"></div><div class="fl" style="top:142px;letter-spacing:-.5px">Khối lớp 3</div>
<div class="rad" style="top:177px"></div><div class="fl" style="top:177px;letter-spacing:-.5px">Khối lớp 4</div>
<div class="rad" style="top:212px"></div><div class="fl" style="top:212px;letter-spacing:-.5px">Khối lớp 5</div>
<div class="abs" style="left:193px;top:30px;width:17px;height:200px;background:#f0f0f0"></div><div class="abs" style="left:193px;top:47px;width:17px;height:130px;background:#c9c9c9"></div>
<svg class="abs" style="left:196px;top:34px" width="11" height="8" viewBox="0 0 11 8" fill="none" stroke="#444" stroke-width="1.800"><path d="M1.500 6.500l4-4 4 4"/></svg><svg class="abs" style="left:196px;top:218px" width="11" height="8" viewBox="0 0 11 8" fill="none" stroke="#444" stroke-width="1.800"><path d="M1.500 1.500l4 4 4-4"/></svg>
<div class="abs" style="left:17px;top:252px;font-size:13px;color:#7a7a7a;letter-spacing:-.3px">Khoản thu</div>
<div class="chk" style="top:274px"><svg class="abs" style="left:3px;top:4.500px" width="12" height="10" viewBox="0 0 12 10" fill="none" stroke="#fff" stroke-width="1.800" stroke-linecap="round" stroke-linejoin="round"><path d="M2 5l3 3 5-5.500"/></svg></div><div class="fl" style="top:275px">Tất cả</div>
<div class="chk" style="top:306px"><svg class="abs" style="left:3px;top:4.500px" width="12" height="10" viewBox="0 0 12 10" fill="none" stroke="#fff" stroke-width="1.800" stroke-linecap="round" stroke-linejoin="round"><path d="M2 5l3 3 5-5.500"/></svg></div><div class="fl" style="top:307px">Học 2 buổi/ngày</div>
<div class="chk" style="top:338px"><svg class="abs" style="left:3px;top:4.500px" width="12" height="10" viewBox="0 0 12 10" fill="none" stroke="#fff" stroke-width="1.800" stroke-linecap="round" stroke-linejoin="round"><path d="M2 5l3 3 5-5.500"/></svg></div><div class="fl" style="top:339px">Gửi xe</div>
</div>
<div class="btn" style="left:807px;top:105px;width:105px">Xem chi tiết</div>
<div class="btn" style="left:921px;top:105px;width:174px"><span class="abs" style="left:15px;top:0">Thông báo thu tiền</span><svg class="abs" style="left:151px;top:11px" width="14" height="10" viewBox="0 0 14 10" fill="none" stroke="#fff" stroke-width="2" stroke-linecap="round" stroke-linejoin="round"><path d="M2 2.500l5 5 5-5"/></svg></div>
<div class="wbtn" style="left:1103px;top:105px;width:155px"><svg class="abs" style="left:12px;top:6px" width="18" height="18" viewBox="0 0 18 18" fill="none" stroke="#3a3a3a" stroke-width="1.700" stroke-linecap="round" stroke-linejoin="round"><path d="M15.500 7A7 7 0 0 0 3 5.500"/><path d="M2.500 11A7 7 0 0 0 15 12.500"/><path d="M3 2v3.800h3.800M15 16v-3.800h-3.800"/></svg><span class="abs" style="left:36px;top:8px;font-size:14px;color:#111;white-space:nowrap;letter-spacing:-.32px">Cập nhật đợt thu</span></div>
<div class="wbtn" style="left:1266px;top:105px;width:32px"><svg class="abs" style="left:5px;top:4px" width="20" height="22" viewBox="0 0 20 22" fill="none" stroke="#444" stroke-width="1.400" stroke-linecap="round" stroke-linejoin="round"><path d="M1.500 5h17M7 5V2.500h6V5M3.500 5l.8 14.500c0 .8.700 1.500 1.500 1.500h8.400c.8 0 1.500-.7 1.500-1.500L16.500 5"/><path d="M6.800 9v8M10 9v8M13.200 9v8"/></svg></div>
<div class="wbtn" style="left:1306px;top:105px;width:32px"><svg class="abs" style="left:5px;top:5px" width="20" height="20" viewBox="0 0 20 20" fill="none" stroke="#333" stroke-width="1.500" stroke-linecap="round" stroke-linejoin="round"><path d="M5.500 6V2.500c0-.6.400-1 1-1h7c.6 0 1 .4 1 1V6"/><path d="M5.500 15H3c-.8 0-1.500-.7-1.500-1.500V8c0-1.100.9-2 2-2h13c1.100 0 2 .9 2 2v5.500c0 .8-.7 1.500-1.500 1.500h-2.500"/><rect x="5.500" y="11" width="9" height="7.500" rx="1"/><path d="M8 13.500h4M8 16h4"/><circle cx="15.500" cy="9" r=".6" fill="#333"/></svg></div>
<svg class="abs" style="left:1352px;top:116px" width="20" height="8" viewBox="0 0 20 8" fill="#8b8b99" stroke="#3a3a48" stroke-width="1.300"><circle cx="4" cy="4" r="1.400"/><circle cx="10.050" cy="4" r="1.400"/><circle cx="16.100" cy="4" r="1.400"/></svg>
<div id="tbl">
<div class="abs" style="left:0;top:0;width:717px;height:70px;background:#f4f5f9;border-bottom:1px solid #dcdfe8"></div>
<div class="abs" style="left:0;top:32px;width:99px;height:1px;background:#e1e3ec"></div>
<div class="th" style="left:0;width:100px;text-align:center;top:9px">Nhóm lớp</div>
<div class="abs" style="left:5px;top:38px;width:90px;height:26px;border:1px solid #e0e0e0;border-radius:3px;background:#fff"><svg class="abs" style="left:6px;top:8px" width="9" height="9" viewBox="0 0 9 9" fill="none" stroke="#666" stroke-width=".9" stroke-linejoin="round"><path d="M.8 1h7.400L5.300 4.500v3L3.700 8.300V4.500z"/></svg></div>
<div class="th" style="left:99px;width:130px;text-align:center;top:28px">Số thu</div>
<div class="th" style="left:229px;width:130px;text-align:center;top:28px">Số đã thu</div>
<div class="th" style="left:376px;top:28px">Số còn phải thu</div>
<div class="row" style="top:71px"><span style="left:11px;color:#1f86ee;letter-spacing:-.62px">Khối lớp 1</span><span style="right:498px">26.350.000</span><span style="right:368px">0</span><span style="right:238px">26.350.000</span></div>
<div class="row alt" style="top:110px"><span style="left:11px;color:#1f86ee;letter-spacing:-.62px">Khối lớp 2</span><span style="right:498px">26.860.000</span><span style="right:368px">0</span><span style="right:238px">26.860.000</span></div>
<div class="row" style="top:149px"><span style="left:11px;color:#1f86ee;letter-spacing:-.62px">Khối lớp 3</span><span style="right:498px">27.200.000</span><span style="right:368px">0</span><span style="right:238px">27.200.000</span></div>
<div class="row alt" style="top:188px"><span style="left:11px;color:#1f86ee;letter-spacing:-.62px">Khối lớp 4</span><span style="right:498px">26.860.000</span><span style="right:368px">0</span><span style="right:238px">26.860.000</span></div>
<div class="row" style="top:227px"><span style="left:11px;color:#1f86ee;letter-spacing:-.62px">Khối lớp 5</span><span style="right:498px">27.200.000</span><span style="right:368px">0</span><span style="right:238px">27.200.000</span><div class="abs" style="left:505px;top:14px;width:11px;height:11px;border-radius:50%;background:#f5a623"></div><span style="left:520px">0</span></div>
<div class="vl" style="left:99px;top:0;height:266px"></div>
<div class="vl" style="left:229px;top:0;height:266px"></div>
<div class="vl" style="left:359px;top:0;height:266px"></div>
<div class="vl" style="left:489px;top:0;height:266px"></div>
<div class="vl" style="left:619px;top:0;height:266px"></div>
<div class="abs" style="left:0;top:557px;width:717px;height:17px;background:#f0f0f0"></div><div class="abs" style="left:17px;top:557px;width:563px;height:17px;background:#cbcbcb"></div>
<svg class="abs" style="left:4px;top:561px" width="8" height="11" viewBox="0 0 8 11" fill="none" stroke="#444" stroke-width="1.800"><path d="M6.500 1.500l-4 4 4 4"/></svg><svg class="abs" style="left:705px;top:560px" width="8" height="11" viewBox="0 0 8 11" fill="none" stroke="#444" stroke-width="1.800"><path d="M1.500 1.500l4 4-4 4"/></svg>
<div class="abs" style="left:0;top:574px;width:717px;height:35px;background:#dae1ef;font-size:14px;color:#333"><span class="abs" style="left:10px;top:10px;white-space:nowrap">Tổng: <b>5</b> kết...</span><b class="abs" style="right:497px;top:10px;letter-spacing:.3px">134.470.000</b><b class="abs" style="right:368px;top:10px">0</b><b class="abs" style="right:237px;top:10px;letter-spacing:.3px">134.470.000</b><b class="abs" style="left:517px;top:10px">0</b><b class="abs" style="left:714px;top:10px">7</b></div>
<div class="vl" style="left:99px;top:574px;height:35px;background:#ccd4e4"></div>
<div class="vl" style="left:229px;top:574px;height:35px;background:#ccd4e4"></div>
<div class="vl" style="left:359px;top:574px;height:35px;background:#ccd4e4"></div>
<div class="vl" style="left:489px;top:574px;height:35px;background:#ccd4e4"></div>
<div class="vl" style="left:619px;top:574px;height:35px;background:#ccd4e4"></div>
</div>
<div id="menu">
<div class="mn" style="top:5px"><svg class="abs" style="left:10px;top:5px" width="22" height="22" viewBox="0 0 22 22" stroke="#1cb86c" stroke-width="1.500" fill="none" stroke-linecap="round" stroke-linejoin="round"><rect x="1.500" y="4" width="19" height="15.500" rx="2"/><path d="M1.500 8.500h19M6 2v4M16 2v4"/><path d="M5 12h3M9.500 12h3M14 12h3M5 15.500h3M9.500 15.500h3M14 15.500h3" stroke-width="1.500"/></svg><span>Lấy số lượng sử dụng</span></div>
<div class="mn" style="top:37px"><svg class="abs" style="left:10px;top:5px" width="22" height="22" viewBox="0 0 22 22" stroke="#1cb86c" stroke-width="1.500" fill="none" stroke-linecap="round" stroke-linejoin="round"><circle cx="15" cy="5.800" r="4.900"/><text x="15" y="8.800" font-size="8" font-weight="bold" fill="#1cb86c" stroke="none" text-anchor="middle" font-family="Liberation Sans, sans-serif">$</text><path d="M1.500 14h3v6.500h-3zM4.500 15c2-1.200 4-1.200 6 0h3.500c1 0 1 1.800 0 1.800h-3.500M4.500 19.500c3.500 1.200 7 1.200 9.500.3l6.500-3c.9-.6 0-1.900-1.100-1.500l-4.500 1.700"/></svg><span>Sử dụng số dư</span></div>
<div class="mn" style="top:69px"><svg class="abs" style="left:10px;top:5px" width="22" height="22" viewBox="0 0 22 22" stroke="#1cb86c" stroke-width="1.500" fill="none" stroke-linecap="round" stroke-linejoin="round"><rect x="2" y="2" width="13" height="7" rx="1"/><rect x="5" y="4.500" width="13" height="7" rx="1"/><circle cx="11.500" cy="8" r="1.800"/><path d="M17 15h3.500v6H17zM17 16c-2-1-4-1-6 0h-3c-1 0-1 1.700 0 1.700h3M17 20.300c-3.500 1-7 1-9.500.2l-5-2.700c-.9-.6 0-1.800 1-1.400l4 1.500"/></svg><span>Thiết lập sử dụng tiền tồn</span></div>
<div class="mn" style="top:101px"><svg class="abs" style="left:10px;top:5px" width="22" height="22" viewBox="0 0 22 22" stroke="#1cb86c" stroke-width="1.500" fill="none" stroke-linecap="round" stroke-linejoin="round"><path d="M11 3v15M6.500 20.500h9M8.500 18h5M3 5.500c3 0 4-2 8-2s5 2 8 2"/><path d="M1.500 11l2.800-5.500L7 11c0 1.500-1.200 2.500-2.700 2.500S1.500 12.500 1.500 11zM15 11l2.800-5.500L20.500 11c0 1.500-1.200 2.500-2.700 2.500S15 12.500 15 11z"/><path d="M1.500 11H7M15 11h5.500"/></svg><span>Tất toán tiền tồn</span></div>
<div class="mn" style="top:133px"><svg class="abs" style="left:10px;top:5px" width="22" height="22" viewBox="0 0 22 22" stroke="#1cb86c" stroke-width="1.500" fill="none" stroke-linecap="round" stroke-linejoin="round"><path d="M5 2.500L1.500 6 5 9.500M1.500 6h15c2 0 3.500 1.500 3.500 3.500M17 12.500l3.500 3.500-3.500 3.500M20.500 16h-15C3.500 16 2 14.500 2 12.500" stroke-width="1.600"/></svg><span>Cập nhật đợt thu</span></div>
<div class="mn" style="top:165px;background:#f4f5f9"><svg class="abs" style="left:10px;top:5px" width="22" height="22" viewBox="0 0 22 22" stroke="#1cb86c" stroke-width="1.500" fill="none" stroke-linecap="round" stroke-linejoin="round"><rect x="6" y="4" width="13" height="16" rx="2"/><path d="M3.500 16.500c-1 0-1.700-.8-1.700-1.800V3.500c0-1 .8-1.800 1.800-1.800H13c1 0 1.800.7 1.800 1.500M9 8.500h7M9 11.500h7M9 14.500h7M9 17h7"/></svg><span>Sao chép dữ liệu của đợt thu trước</span></div>
<div class="mn" style="top:197px"><svg class="abs" style="left:10px;top:5px" width="22" height="22" viewBox="0 0 22 22" stroke="#1cb86c" stroke-width="1.500" fill="none" stroke-linecap="round" stroke-linejoin="round"><path d="M14.500 3c1.200-1.200 3 0 3.500 .6s1.700 2.300.5 3.500L9 16.500l-5 1.200 1.200-5z"/><path d="M12.500 5l4 4M6.500 12.500l2.500 2.500"/><path d="M2 21h18"/></svg><span style="letter-spacing:-.24px">Ghi nhận thu thừa/thiếu khoản thu</span></div>
<div class="mn" style="top:229px"><svg class="abs" style="left:10px;top:5px" width="22" height="22" viewBox="0 0 22 22" stroke="#1cb86c" stroke-width="1.500" fill="none" stroke-linecap="round" stroke-linejoin="round"><path d="M11 1.500v10M7 8l4 4 4-4"/><rect x="1.500" y="14.500" width="19" height="6" rx="3"/><path d="M15.500 17.500h2"/></svg><span>Nhập khẩu</span></div>
</div>
<div class="abs" style="left:1382px;top:373px;width:16px;height:32px;background:#1466e0;border-radius:4px 0 0 4px"><svg class="abs" style="left:5px;top:11px" width="7" height="10" viewBox="0 0 8 12" fill="none" stroke="#fff" stroke-width="2.400" stroke-linecap="round" stroke-linejoin="round"><path d="M6 2L2 6l4 4"/></svg></div>
<div class="rr" style="left:3px;top:165px;width:157px;height:48px"></div>
<div class="rr" style="left:320px;top:50px;width:102px;height:37px"></div>
<div class="rr" style="left:218px;top:269px;width:193px;height:40px"></div>
<div class="rr" style="left:1346px;top:104px;width:33px;height:32px"></div>
<div class="rr" style="left:1123px;top:300px;width:267px;height:37px"></div>
<svg class="abs" style="left:1280px;top:130px" width="100" height="175" viewBox="1280 130 100 175"><circle cx="1363.600" cy="141.200" r="2.900" fill="#f9474b"/><path d="M1363.600 141L1304 279.500" stroke="#f9474b" stroke-width="5.800" stroke-dasharray="21.500 5.500" stroke-dashoffset="3" fill="none"/><path d="M1296.600 296L1294 272.800 1304.500 279 1314.300 281.500z" fill="#f9474b"/></svg>
<div class="rc" style="left:140px;top:145px;width:40px;height:40px;line-height:42.500px;font-family:'NanumGothic','Liberation Sans',sans-serif;font-size:28px;font-weight:bold;text-indent:1px;-webkit-text-stroke:0">1</div>
<div class="rc" style="left:400.5px;top:29.5px;width:41px;height:41px;line-height:41px">2</div>
<div class="rc" style="left:390px;top:249px;width:40px;height:40px;line-height:40px">3</div>
<div class="rc" style="left:1326px;top:73px;width:40px;height:40px;line-height:40px">4</div>
<div class="rc" style="left:1094.700px;top:297.800px;width:40px;height:40px;line-height:40px">5</div>
<div class="abs" style="left:206px;top:49px;width:7px;height:727px;background:linear-gradient(90deg,rgba(0,0,0,.09),rgba(0,0,0,0))"></div>
<div id="frame"></div>
</body>
</html>
